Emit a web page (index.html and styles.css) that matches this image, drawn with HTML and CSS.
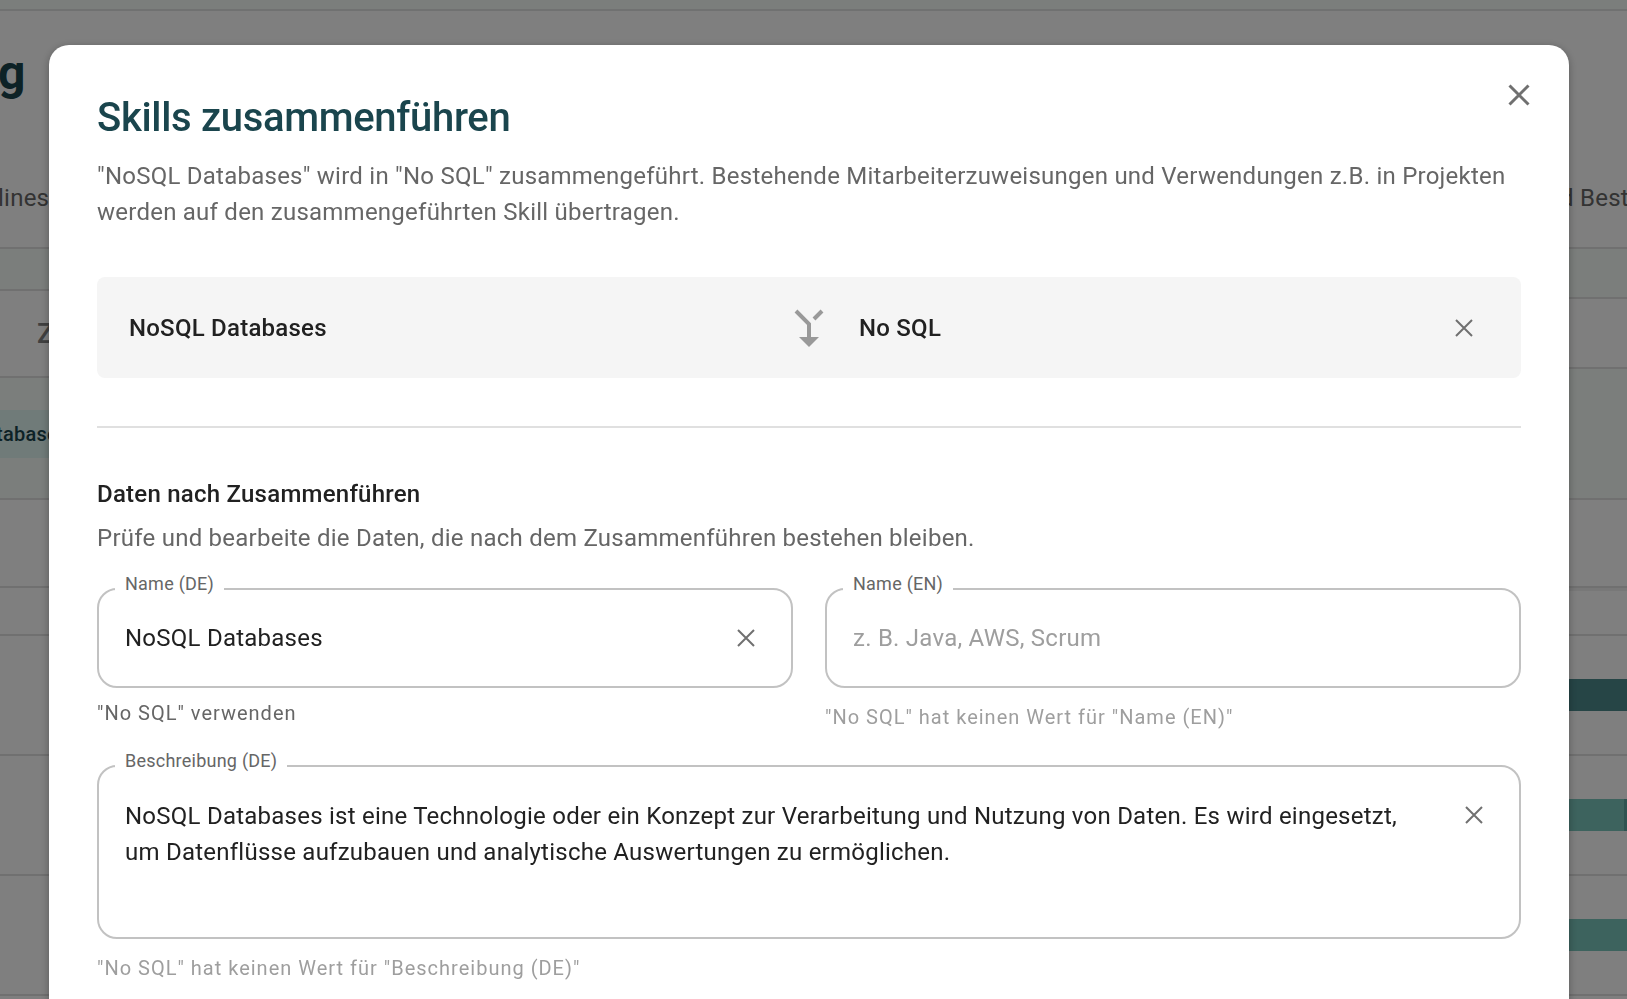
FILE: index.html
```html
<!DOCTYPE html>
<html lang="de">
<head>
    <meta charset="UTF-8">
    <meta name="viewport" content="width=device-width, initial-scale=1.0">
    <title>Skills zusammenführen</title>
    <link rel="stylesheet" href="styles.css">
</head>
<body>
    <div class="page" aria-hidden="true">
        <div class="topbar"></div>
        <div class="page-head">
            <div class="page-title">g</div>
            <div class="page-intro">
                <span>lines</span>
                <span class="intro-end">d Best</span>
            </div>
        </div>
        <div class="planner">
            <div class="list">
                <div class="cell toolbar tinted"></div>
                <div class="cell list-head">Z</div>
                <div class="cell group tinted"><span class="chip">tabase</span></div>
                <div class="cell summary"></div>
                <div class="cell spacer"></div>
                <div class="cell row"></div>
                <div class="cell row"></div>
                <div class="cell row"></div>
                <div class="cell row"></div>
            </div>
            <div class="timeline">
                <div class="cell months tinted"></div>
                <div class="cell weeks"></div>
                <div class="cell group-wide tinted"></div>
                <div class="cell summary"></div>
                <div class="cell spacer shaded"></div>
                <div class="cell row"><div class="bar dark"></div></div>
                <div class="cell row"><div class="bar split"></div></div>
                <div class="cell row"><div class="bar"></div></div>
                <div class="cell row"></div>
            </div>
        </div>
    </div>

    <div class="overlay">
        <div class="dialog" role="dialog" aria-modal="true" aria-labelledby="dialogTitle">
            <button type="button" class="icon-btn close" aria-label="Schließen">
                <svg width="22" height="22" viewBox="0 0 22 22"><path d="M1.5 1.5l19 19M20.500 1.500l-19 19"/></svg>
            </button>
            <h1 id="dialogTitle">Skills zusammenführen</h1>
            <p class="description">"NoSQL Databases" wird in "No SQL" zusammengeführt. Bestehende Mitarbeiterzuweisungen und Verwendungen z.B. in Projekten werden auf den zusammengeführten Skill übertragen.</p>

            <div class="merge">
                <div class="merge-name">NoSQL Databases</div>
                <svg class="merge-icon" width="30" height="38" viewBox="0 0 30 38">
                    <path d="M2 2l13 13v14M28 2l-8 8" fill="none" stroke="#999" stroke-width="4"/>
                    <path d="M5 28h20l-10 10z" fill="#999"/>
                </svg>
                <div class="merge-target">
                    <div class="merge-name">No SQL</div>
                    <button type="button" class="icon-btn" aria-label="No SQL entfernen">
                        <svg width="18" height="18" viewBox="0 0 18 18"><path d="M1 1l16 16M17 1L1 17"/></svg>
                    </button>
                </div>
            </div>

            <hr>

            <form>
                <h2>Daten nach Zusammenführen</h2>
                <p class="description">Prüfe und bearbeite die Daten, die nach dem Zusammenführen bestehen bleiben.</p>
                <div class="fields">
                    <div>
                        <div class="field">
                            <label for="nameDe">Name (DE)</label>
                            <input type="text" id="nameDe" value="NoSQL Databases">
                            <button type="button" class="icon-btn" aria-label="Name (DE) leeren">
                                <svg width="18" height="18" viewBox="0 0 18 18"><path d="M1 1l16 16M17 1L1 17"/></svg>
                            </button>
                        </div>
                        <button type="button" class="use-value">"No SQL" verwenden</button>
                    </div>
                    <div>
                        <div class="field">
                            <label for="nameEn">Name (EN)</label>
                            <input type="text" id="nameEn" placeholder="z. B. Java, AWS, Scrum">
                        </div>
                        <p class="hint">"No SQL" hat keinen Wert für "Name (EN)"</p>
                    </div>
                    <div class="full">
                        <div class="field area">
                            <label for="descDe">Beschreibung (DE)</label>
                            <textarea id="descDe" rows="3">NoSQL Databases ist eine Technologie oder ein Konzept zur Verarbeitung und Nutzung von Daten. Es wird eingesetzt, um Datenflüsse aufzubauen und analytische Auswertungen zu ermöglichen.</textarea>
                            <button type="button" class="icon-btn" aria-label="Beschreibung (DE) leeren">
                                <svg width="18" height="18" viewBox="0 0 18 18"><path d="M1 1l16 16M17 1L1 17"/></svg>
                            </button>
                        </div>
                        <p class="hint">"No SQL" hat keinen Wert für "Beschreibung (DE)"</p>
                    </div>
                </div>
            </form>
        </div>
    </div>
</body>
</html>
```
FILE: styles.css
```css
* {
    box-sizing: border-box;
}
body {
    margin: 0;
    font-family: Roboto, "Liberation Sans", sans-serif;
    font-size: 24px;
    line-height: 36px;
    letter-spacing: 0.01em;
    color: #212121;
    background-color: white;
}
h1, h2, p {
    margin: 0;
}

/* page behind the dialog */
.page {
    height: 100vh;
    overflow: hidden;
}
.topbar {
    height: 11px;
    background-color: #f6fcf9;
    border-bottom: 2px solid #e0e3e2;
}
.page-head {
    height: 236px;
    padding-top: 32px;
}
.page-title {
    font-size: 48px;
    line-height: 60px;
    font-weight: bold;
    letter-spacing: 0;
    text-indent: -2px;
    color: #1a454d;
}
.page-intro {
    display: flex;
    justify-content: space-between;
    margin-top: 77px;
    text-indent: -2px;
    color: #666;
    white-space: nowrap;
}
.intro-end {
    width: 65px;
}
.planner {
    display: flex;
    border-top: 2px solid #e0e0e0;
}
.list {
    flex: 1;
}
.timeline {
    width: 66px;
}
.cell {
    border-bottom: 2px solid #e0e0e0;
}
.tinted {
    background-color: #f6fcf9;
}
.toolbar {
    height: 42px;
}
.list-head {
    height: 87px;
    padding: 25px 0 0 37px;
    font-size: 28px;
    font-weight: 500;
    color: #808080;
}
.group {
    height: 122px;
    padding-top: 32px;
}
.chip {
    display: block;
    height: 48px;
    line-height: 48px;
    width: 120px;
    font-size: 20px;
    font-weight: 500;
    text-indent: -4px;
    color: #1a454d;
    background-color: #e0f6f2;
}
.months {
    height: 50px;
}
.weeks {
    height: 70px;
}
.group-wide {
    height: 131px;
}
.summary {
    height: 88px;
}
.spacer {
    height: 48px;
}
.shaded {
    box-shadow: inset 0 3px #f0f0f0;
}
.row {
    height: 120px;
    padding-top: 43px;
}
.bar {
    height: 32px;
    background-color: #7ac6bc;
}
.bar.dark {
    background-color: #4c8a8d;
}
.bar.split {
    border-right: 3px solid #5fa9a2;
}

/* dialog */
.overlay {
    position: fixed;
    inset: 0;
    overflow: hidden;
    padding: 45px 58px 0 49px;
    background-color: rgba(0, 0, 0, 0.5);
}
.dialog {
    position: relative;
    min-height: 100%;
    padding: 48px;
    background-color: white;
    border-radius: 20px 20px 0 0;
    box-shadow: 0 2px 8px rgba(0, 0, 0, 0.3);
}
h1 {
    font-size: 40px;
    line-height: 50px;
    font-weight: 500;
    letter-spacing: -0.008em;
    color: #1a454d;
}
h2 {
    font-size: 24px;
    line-height: 36px;
    font-weight: 500;
}
.description {
    color: #666;
}
h1 + .description {
    margin-top: 15px;
}
h2 + .description {
    margin-top: 8px;
}
.icon-btn {
    display: flex;
    align-items: center;
    justify-content: center;
    flex: none;
    width: 50px;
    height: 48px;
    padding: 0;
    border: none;
    background: none;
    cursor: pointer;
}
.icon-btn path {
    fill: none;
    stroke: #707070;
    stroke-width: 2;
}
.close {
    position: absolute;
    top: 26px;
    right: 25px;
}
.close path {
    stroke-width: 3;
}
.merge {
    display: grid;
    grid-template-columns: 1fr 30px 1fr;
    align-items: center;
    min-height: 101px;
    margin-top: 47px;
    padding: 0 32px;
    border-radius: 8px;
    background-color: #f5f5f5;
}
.merge-target {
    display: flex;
    align-items: center;
    justify-content: space-between;
    padding-left: 35px;
}
.merge-name {
    font-weight: 500;
}
hr {
    height: 2px;
    margin: 48px 0;
    border: none;
    background-color: #e0e0e0;
}
.fields {
    display: grid;
    grid-template-columns: 1fr 1fr;
    gap: 34px 32px;
    margin-top: 32px;
}
.full {
    grid-column: 1 / 3;
}
.field {
    position: relative;
    display: flex;
    align-items: center;
    height: 100px;
    padding: 0 20px 0 26px;
    border: 2px solid #c2c2c2;
    border-radius: 20px;
}
.field label {
    position: absolute;
    top: -20px;
    left: 16px;
    padding: 0 10px;
    font-size: 18px;
    line-height: 28px;
    color: #666;
    background-color: white;
}
.field input,
.field textarea {
    flex: 1;
    min-width: 0;
    padding: 0;
    border: none;
    outline: none;
    resize: none;
    background: none;
    font: inherit;
    letter-spacing: inherit;
    color: inherit;
}
.field textarea {
    padding-right: 24px;
}
.field input::placeholder {
    color: #9e9e9e;
}
.area {
    align-items: flex-start;
    height: 174px;
    padding-top: 31px;
}
.area .icon-btn {
    margin-top: -7px;
}
.hint,
.use-value {
    font-size: 20px;
    line-height: 28px;
    letter-spacing: 1px;
}
.hint {
    margin-top: 15px;
    color: #9e9e9e;
}
.use-value {
    display: block;
    margin-top: 11px;
    padding: 0;
    border: none;
    background: none;
    font-family: inherit;
    color: #666;
    cursor: pointer;
}
```
